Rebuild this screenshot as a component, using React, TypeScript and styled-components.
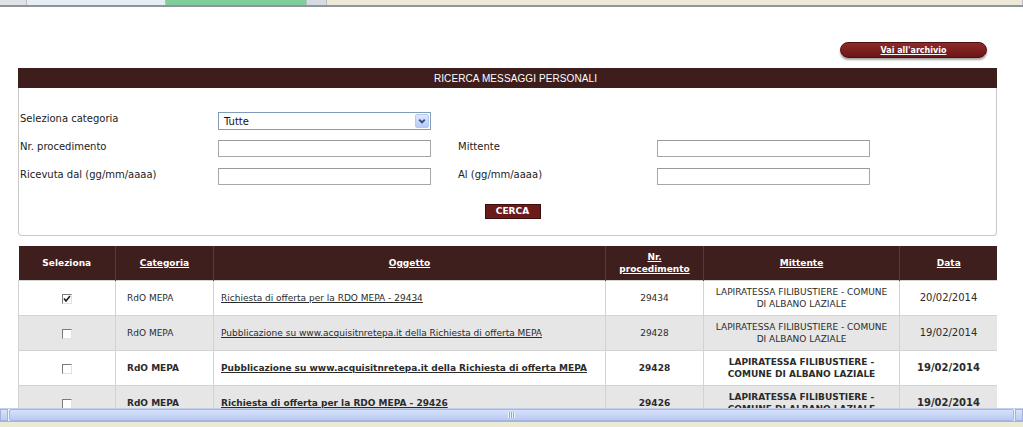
import React from "react";
import styled, { createGlobalStyle, css } from "styled-components";

type Message = {
  id: number;
  checked: boolean;
  unread: boolean;
  categoria: string;
  oggetto: string;
  numero: string;
  mittente: string;
  data: string;
};

const MESSAGES: Message[] = [
  {
    id: 1,
    checked: true,
    unread: false,
    categoria: "RdO MEPA",
    oggetto: "Richiesta di offerta per la RDO MEPA - 29434",
    numero: "29434",
    mittente: "LAPIRATESSA FILIBUSTIERE - COMUNE DI ALBANO LAZIALE",
    data: "20/02/2014",
  },
  {
    id: 2,
    checked: false,
    unread: false,
    categoria: "RdO MEPA",
    oggetto:
      "Pubblicazione su www.acquisitnretepa.it della Richiesta di offerta MEPA",
    numero: "29428",
    mittente: "LAPIRATESSA FILIBUSTIERE - COMUNE DI ALBANO LAZIALE",
    data: "19/02/2014",
  },
  {
    id: 3,
    checked: false,
    unread: true,
    categoria: "RdO MEPA",
    oggetto:
      "Pubblicazione su www.acquisitnretepa.it della Richiesta di offerta MEPA",
    numero: "29428",
    mittente: "LAPIRATESSA FILIBUSTIERE - COMUNE DI ALBANO LAZIALE",
    data: "19/02/2014",
  },
  {
    id: 4,
    checked: false,
    unread: true,
    categoria: "RdO MEPA",
    oggetto: "Richiesta di offerta per la RDO MEPA - 29426",
    numero: "29426",
    mittente: "LAPIRATESSA FILIBUSTIERE - COMUNE DI ALBANO LAZIALE",
    data: "19/02/2014",
  },
];

const TABS = [
  { id: "a", width: 27, color: "#dfe3e8" },
  { id: "b", width: 139, color: "#e4eef4" },
  { id: "c", width: 141, color: "#7fcf9d" },
  { id: "d", width: 20, color: "#d6dbe1" },
  { id: "e", width: 696, color: "#ece9d8" },
];

const App: React.FC = () => {
  return (
    <Window>
      <GlobalStyle />
      <TabStrip>
        {TABS.map(({ id, width, color }) => (
          <Tab key={id} $color={color} style={{ width }} />
        ))}
      </TabStrip>

      <Page>
        <Toolbar>
          <ArchiveButton href="#">Vai all'archivio</ArchiveButton>
        </Toolbar>

        <PanelTitle>RICERCA MESSAGGI PERSONALI</PanelTitle>
        <PanelBody>
          <FormRows>
            <FormRow>
              <Label>Seleziona categoria</Label>
              <SelectBox>
                <SelectValue>Tutte</SelectValue>
                <SelectArrow>
                  <svg width="13" height="12" viewBox="0 0 13 12">
                    <path
                      d="M3.5 4.5 L6.5 7.5 L9.5 4.5"
                      fill="none"
                      stroke="#2f4a80"
                      strokeWidth="2"
                    />
                  </svg>
                </SelectArrow>
              </SelectBox>
            </FormRow>
            <FormRow>
              <Label>Nr. procedimento</Label>
              <TextInput />
              <Label $indent>Mittente</Label>
              <TextInput />
            </FormRow>
            <FormRow>
              <Label>Ricevuta dal (gg/mm/aaaa)</Label>
              <TextInput />
              <Label $indent>Al (gg/mm/aaaa)</Label>
              <TextInput />
            </FormRow>
          </FormRows>
          <Actions>
            <SearchButton>CERCA</SearchButton>
          </Actions>
        </PanelBody>

        <Results>
          <colgroup>
            <col style={{ width: 97 }} />
            <col style={{ width: 98 }} />
            <col style={{ width: 392 }} />
            <col style={{ width: 98 }} />
            <col style={{ width: 196 }} />
            <col style={{ width: 98 }} />
          </colgroup>
          <thead>
            <tr>
              <HeadCell>Seleziona</HeadCell>
              <HeadCell>
                <HeadLink href="#">Categoria</HeadLink>
              </HeadCell>
              <HeadCell>
                <HeadLink href="#">Oggetto</HeadLink>
              </HeadCell>
              <HeadCell>
                <HeadLink href="#">
                  Nr.
                  <br />
                  procedimento
                </HeadLink>
              </HeadCell>
              <HeadCell>
                <HeadLink href="#">Mittente</HeadLink>
              </HeadCell>
              <HeadCell>
                <HeadLink href="#">Data</HeadLink>
              </HeadCell>
            </tr>
          </thead>
          <tbody>
            {MESSAGES.map((m, i) => (
              <Row key={m.id} $shaded={i % 2 === 1} $unread={m.unread}>
                <Cell $align="center">
                  <CheckBox>
                    {m.checked && (
                      <svg width="8" height="8" viewBox="0 0 8 8">
                        <path
                          d="M1 3.5 L3 6 L7 1"
                          fill="none"
                          stroke="#1c1c1c"
                          strokeWidth="1.6"
                        />
                      </svg>
                    )}
                  </CheckBox>
                </Cell>
                <Cell $padLeft={11}>{m.categoria}</Cell>
                <Cell $padLeft={7}>
                  <SubjectLink href="#">{m.oggetto}</SubjectLink>
                </Cell>
                <Cell $align="center">{m.numero}</Cell>
                <Cell $align="center">{m.mittente}</Cell>
                <DateCell $align="center">{m.data}</DateCell>
              </Row>
            ))}
          </tbody>
        </Results>
      </Page>

      <HScroll>
        <ScrollArrow />
        <ScrollThumb>
          <Grip />
        </ScrollThumb>
        <ScrollArrow />
      </HScroll>
      <StatusBar />
    </Window>
  );
};

export default App;

const GlobalStyle = createGlobalStyle`
  html, body {
    margin: 0;
    padding: 0;
    background: #fff;
  }
  body {
    font-family: "DejaVu Sans", Verdana, sans-serif;
    color: #333;
    overflow: hidden;
  }
`;

const Window = styled.div`
  width: 1023px;
  height: 427px;
  display: flex;
  flex-direction: column;
  overflow: hidden;
`;

const TabStrip = styled.div`
  height: 5px;
  display: flex;
  border-bottom: 2px solid #8f9499;
  flex-shrink: 0;
`;

const Tab = styled.div<{ $color: string }>`
  height: 100%;
  background: ${(p) => p.$color};
  border-right: 1px solid #b9bec4;
  box-sizing: border-box;
`;

const Page = styled.div`
  flex: 1;
  overflow: hidden;
  padding: 35px 0 0 18px;
  box-sizing: border-box;
  width: 997px;
`;

const Toolbar = styled.div`
  display: flex;
  justify-content: flex-end;
  padding-right: 10px;
  margin-bottom: 10px;
`;

const ArchiveButton = styled.a`
  width: 147px;
  height: 16px;
  box-sizing: border-box;
  display: flex;
  align-items: center;
  justify-content: center;
  border-radius: 8px;
  border: 1px solid #4c0f0f;
  background: linear-gradient(#8e2b2b, #6c1616);
  box-shadow: 0 2px 2px rgba(0, 0, 0, 0.35);
  color: #fff;
  font-size: 8px;
  font-weight: bold;
  text-decoration: underline;
`;

const PanelTitle = styled.div`
  height: 20px;
  background: #3e1e1d;
  color: #fff;
  display: flex;
  align-items: center;
  justify-content: center;
  padding-left: 16px;
  font-family: "Liberation Sans", Arial, sans-serif;
  font-size: 10px;
  letter-spacing: 0.1px;
`;

const PanelBody = styled.div`
  border: 1px solid #c9c9c9;
  border-top: none;
  border-radius: 0 0 4px 4px;
  padding: 24px 0 16px 0;
  margin-bottom: 10px;
`;

const FormRows = styled.div`
  display: flex;
  flex-direction: column;
  gap: 11px;
`;

const FormRow = styled.div`
  display: grid;
  grid-template-columns: 199px 213px 226px 213px;
  align-items: center;
  height: 17px;
`;

const Label = styled.label<{ $indent?: boolean }>`
  font-size: 10px;
  color: #222;
  padding-left: ${(p) => (p.$indent ? 27 : 1)}px;
  margin-bottom: 5px;
  white-space: nowrap;
`;

const TextInput = styled.input`
  width: 213px;
  height: 17px;
  box-sizing: border-box;
  border: 1px solid #a7a7a7;
  border-top-color: #9a9a9a;
  background: #fff;
  padding: 0 3px;
  font-family: inherit;
  font-size: 10px;
  outline: none;
`;

const SelectBox = styled.div`
  width: 213px;
  height: 18px;
  box-sizing: border-box;
  border: 1px solid #7f9db9;
  background: #fff;
  display: flex;
  align-items: center;
  padding: 1px;
`;

const SelectValue = styled.span`
  flex: 1;
  padding-left: 4px;
  font-size: 10px;
  color: #111;
`;

const SelectArrow = styled.span`
  width: 14px;
  height: 14px;
  box-sizing: border-box;
  display: flex;
  align-items: center;
  justify-content: center;
  border: 1px solid #b5c8ef;
  border-radius: 2px;
  background: linear-gradient(#dfe8fd, #b7cbf6);
`;

const Actions = styled.div`
  display: flex;
  justify-content: center;
  margin-top: 19px;
  padding-left: 10px;
`;

const SearchButton = styled.button`
  width: 56px;
  height: 15px;
  padding: 0;
  box-sizing: border-box;
  border: 1px solid #3b0d0d;
  background: #6c1b1b;
  color: #fff;
  font-family: inherit;
  font-size: 9px;
  font-weight: bold;
  line-height: 13px;
`;

const Results = styled.table`
  width: 979px;
  table-layout: fixed;
  border-collapse: collapse;
  font-size: 9px;
  line-height: 12px;
`;

const HeadCell = styled.th`
  height: 34px;
  padding: 0 4px;
  background: #3e1f1e;
  color: #fff;
  font-size: 9px;
  font-weight: bold;
  text-align: center;
  border-left: 1px solid #5a3938;
  &:first-child {
    border-left: none;
  }
`;

const HeadLink = styled.a`
  color: #fff;
  text-decoration: underline;
`;

const Row = styled.tr<{ $shaded: boolean; $unread: boolean }>`
  height: 35px;
  background: ${(p) => (p.$shaded ? "#e6e6e6" : "#fff")};
  ${(p) =>
    p.$unread &&
    css`
      font-weight: bold;
    `}
`;

const Cell = styled.td<{ $align?: "left" | "center"; $padLeft?: number }>`
  border: 1px solid #d3d3d3;
  padding: 0 8px 0 ${(p) => (p.$padLeft !== undefined ? p.$padLeft : 8)}px;
  text-align: ${(p) => p.$align || "left"};
  vertical-align: middle;
  color: #2b2b2b;
  overflow: hidden;
`;

const DateCell = styled(Cell)`
  font-size: 10px;
`;

const SubjectLink = styled.a`
  color: #2b2b2b;
  text-decoration: underline;
  white-space: nowrap;
`;

const CheckBox = styled.span`
  display: inline-flex;
  align-items: center;
  justify-content: center;
  width: 10px;
  height: 10px;
  box-sizing: border-box;
  border-top: 1px solid #7a7a7a;
  border-left: 1px solid #7a7a7a;
  border-right: 1px solid #e2e2e2;
  border-bottom: 1px solid #e2e2e2;
  background: #fff;
  vertical-align: middle;
`;

const HScroll = styled.div`
  height: 13px;
  flex-shrink: 0;
  display: flex;
  background: #eef2fb;
  border-top: 1px solid #c4d0ea;
  box-sizing: border-box;
`;

const ScrollArrow = styled.div`
  width: 8px;
  background: linear-gradient(#d7e2fa, #bccdf3);
  border: 1px solid #9fb3dd;
  box-sizing: border-box;
`;

const ScrollThumb = styled.div`
  flex: 1;
  margin: 0 1px;
  display: flex;
  align-items: center;
  justify-content: center;
  background: linear-gradient(#d6e1fa, #b9cbf2);
  border: 1px solid #a3b7e2;
  border-radius: 2px;
  box-sizing: border-box;
`;

const Grip = styled.div`
  width: 7px;
  height: 6px;
  background: repeating-linear-gradient(
    90deg,
    #eef3fe 0 1px,
    #8ea6d8 1px 2px
  );
`;

const StatusBar = styled.div`
  height: 6px;
  flex-shrink: 0;
  background: #ece9d8;
  border-top: 1px solid #b8b4a2;
  box-sizing: border-box;
`;
